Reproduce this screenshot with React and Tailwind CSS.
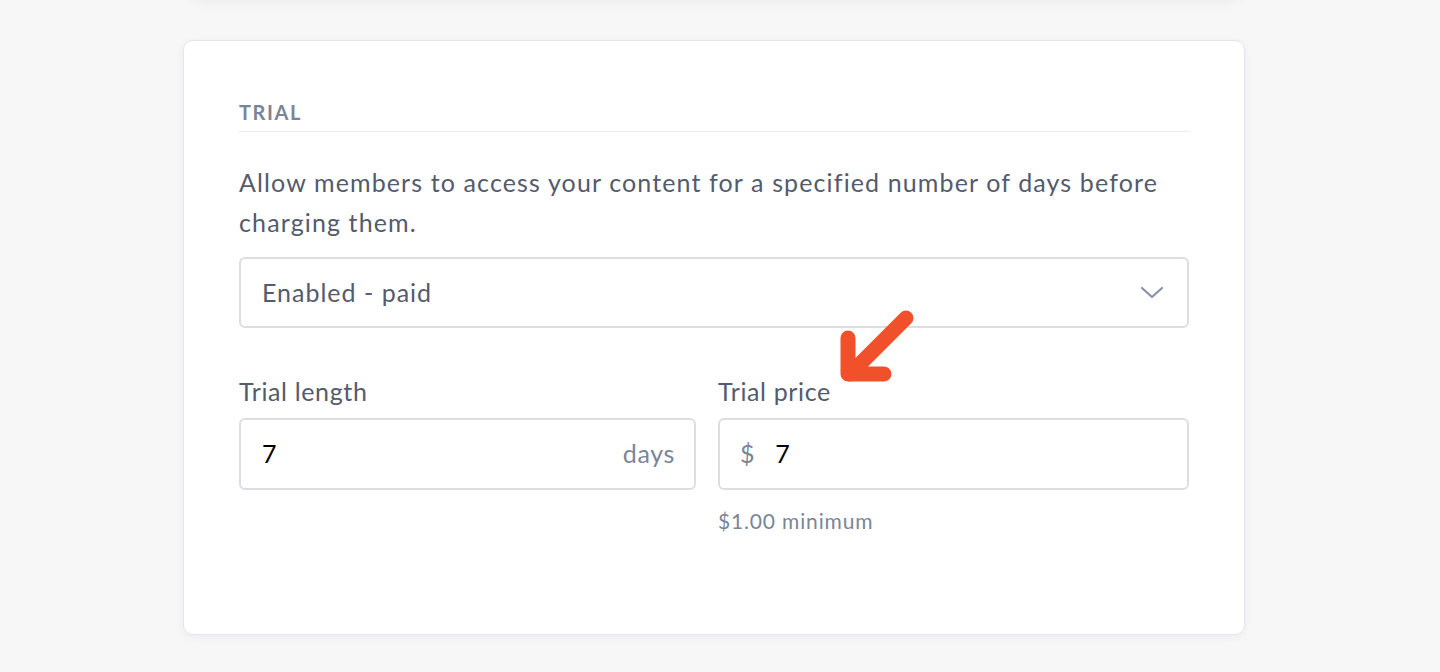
import React from 'react';

const Arrow = () => (
  <svg width="90" height="90" viewBox="0 0 90 90" className="absolute left-[832px] top-[302px]">
    <g stroke="#f0512a" strokeWidth="15" strokeLinecap="round" strokeLinejoin="round" fill="none">
      <line x1="74" y1="16" x2="18" y2="72" />
      <polyline points="16,36 16,72 52,72" />
    </g>
  </svg>
);

const App = () => {
  return (
    <div className="relative h-[672px] w-[1440px] overflow-hidden bg-[#f7f7f7]" style={{ fontFamily: 'Lato, "Open Sans", sans-serif' }}>
      <div className="ml-[190px] -mt-[200px] h-[196px] w-[1050px] rounded-xl bg-white shadow-[0_4px_14px_rgba(0,0,0,0.07)]" />
      <div className="ml-[183px] mt-[44px] h-[595px] w-[1062px] rounded-[10px] border border-[#e3e6ea] bg-white px-[55px] pt-[59px] shadow-[0_2px_10px_rgba(0,0,0,0.05)]">
        <div className="border-b border-[#e6e9ee] pb-[7px] text-[20px] font-bold uppercase leading-[24px] tracking-[0.08em] text-[#7b8598]">
          Trial
        </div>
        <p className="mt-[30px] text-[25px] leading-[40px] tracking-[0.045em] text-[#535b6c]">
          Allow members to access your content for a specified number of days before charging them.
        </p>
        <div className="mt-[15px] flex h-[71px] items-center justify-between rounded-[6px] border-2 border-[#dcdee2] pl-[21px] pr-[23px] text-[25px] tracking-[0.04em] text-[#535b6c]">
          <span>Enabled - paid</span>
          <svg width="24" height="14" viewBox="0 0 24 14" fill="none">
            <polyline points="2,2 12,11 22,2" stroke="#8a93a5" strokeWidth="2.2" strokeLinecap="round" strokeLinejoin="round" />
          </svg>
        </div>
        <div className="mt-[47px] flex gap-[22px] tracking-[0.04em]">
          <div className="w-[457px]">
            <div className="text-[25px] leading-[32px] text-[#535b6c]">Trial length</div>
            <div className="mt-[11px] flex h-[72px] items-center justify-between rounded-[6px] border-2 border-[#dcdee2] pl-[21px] pr-[19px] text-[25px]">
              <span className="text-black">7</span>
              <span className="text-[#7b8598]">days</span>
            </div>
          </div>
          <div className="flex-1">
            <div className="text-[25px] leading-[32px] text-[#535b6c]">Trial price</div>
            <div className="mt-[11px] flex h-[72px] items-center gap-[20px] rounded-[6px] border-2 border-[#dcdee2] pl-[20px] text-[25px]">
              <span className="text-[#7b8598]">$</span>
              <span className="text-black">7</span>
            </div>
            <div className="mt-[15px] text-[21px] tracking-[0.04em] text-[#7b8598]">$1.00 minimum</div>
          </div>
        </div>
      </div>
      <Arrow />
    </div>
  );
};

export default App;
